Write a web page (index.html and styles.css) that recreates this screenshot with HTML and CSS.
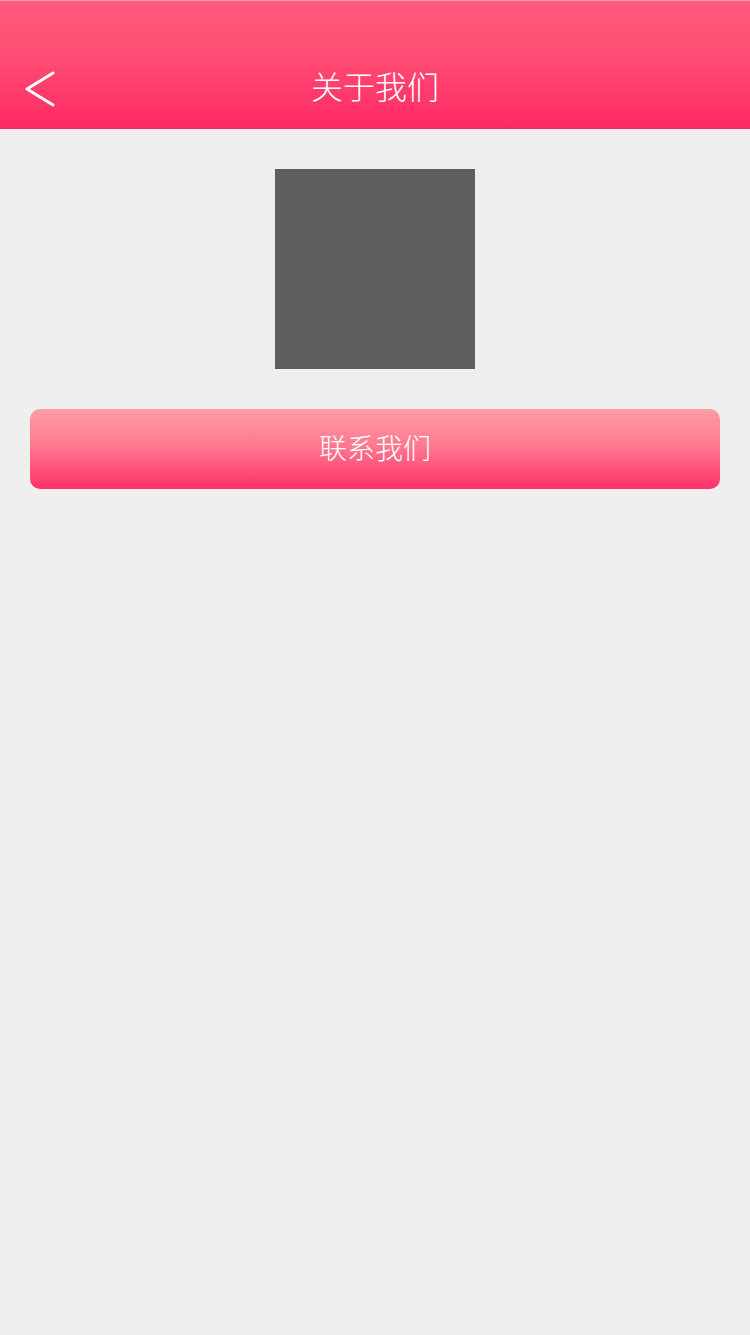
FILE: index.html
```html
<!DOCTYPE html>
<html lang="zh">
<head>
<meta charset="utf-8">
<title>关于我们</title>
<link rel="stylesheet" href="styles.css">
</head>
<body>
<header class="topbar">
  <a class="back" aria-label="返回">
    <svg width="32" height="36" viewBox="0 0 32 36"><path d="M29 2 L3 18 L29 34" fill="none" stroke="#fff" stroke-width="3" stroke-linecap="round" stroke-linejoin="round"/></svg>
  </a>
  <h1 class="title">关于我们</h1>
</header>
<main class="content">
  <div class="logo"></div>
  <button class="contact">联系我们</button>
</main>
</body>
</html>
```
FILE: styles.css
```css
html, body { margin: 0; padding: 0; }
body {
  background: #efefef;
  font-family: "Noto Sans CJK SC", "Noto Sans", sans-serif;
  width: 750px;
  height: 1335px;
  overflow: hidden;
}
.topbar {
  position: relative;
  height: 129px;
  background: linear-gradient(to bottom, #ff5a7c 0%, #ff4c74 45%, #ff2862 100%);
  border-top: 1px solid #f79aaf;
  box-sizing: border-box;
  display: flex;
  align-items: flex-end;
  justify-content: center;
  padding-bottom: 24px;
}
.back {
  position: absolute;
  left: 24px;
  top: 70px;
  display: block;
  line-height: 0;
}
.title {
  margin: 0;
  font-size: 32px;
  font-weight: 300;
  color: #fff;
  line-height: 40px;
}
.content {
  display: flex;
  flex-direction: column;
  align-items: center;
  padding: 40px 30px 0;
}
.logo {
  width: 200px;
  height: 200px;
  background: #5e5e5e;
}
.contact {
  margin-top: 40px;
  width: 690px;
  height: 80px;
  border: none;
  border-radius: 10px;
  background: linear-gradient(to bottom, #ff9ca3 0%, #ff7a8f 45%, #ff3168 100%);
  color: #fff;
  font-family: "Noto Sans CJK SC", "Noto Sans", sans-serif;
  font-size: 28px;
  font-weight: 300;
  padding: 0 0 5px;
  letter-spacing: 0;
}
```
